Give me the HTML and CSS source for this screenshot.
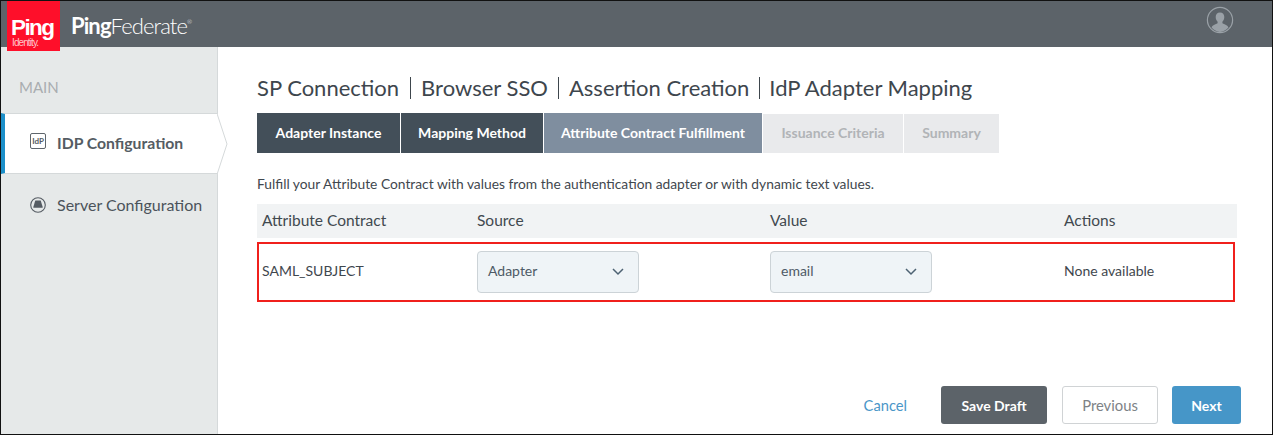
FILE: index.html
```html
<!DOCTYPE html>
<html lang="en">
<head>
<meta charset="utf-8">
<title>PingFederate</title>
<link rel="stylesheet" href="styles.css">
</head>
<body>
<div class="frame">
  <header class="topbar">
    <div class="ping-logo">
      <div class="ping-word">Ping</div>
      <div class="ping-sub">Identity.</div>
    </div>
    <div class="product"><b>Ping</b>Federate<sup>®</sup></div>
    <svg class="avatar" width="28" height="28" viewBox="0 0 28 28" aria-hidden="true">
      <circle cx="14" cy="14" r="12.6" fill="none" stroke="#9aa1a7" stroke-width="1.2"/>
      <path d="M14 6.5c-2.8 0-4.3 2-4.3 4.6 0 2 .8 3.6 1.9 4.7v1.5c-1.400 1-5 1.500-6 4.200A12 12 0 0 0 14 25.900a12 12 0 0 0 8.400-4.400c-1-2.700-4.600-3.200-6-4.200v-1.500c1.100-1.100 1.900-2.700 1.900-4.700 0-2.600-1.500-4.600-4.300-4.600z" fill="#9aa1a7"/>
    </svg>
  </header>
  <div class="body">
    <nav class="sidebar">
      <div class="side-label">MAIN</div>
      <a class="side-item active">
        <span class="idp-icon">IdP</span>
        <span>IDP Configuration</span>
        <svg class="pointer" width="11" height="62" viewBox="0 0 11 62" aria-hidden="true">
          <path d="M0 0.500 L10 31 L0 61.500 Z" fill="#fff"/>
          <path d="M0 0.500 L10 31 L0 61.500" fill="none" stroke="#d5d9da"/>
        </svg>
      </a>
      <a class="side-item">
        <svg class="server-icon" width="16" height="16" viewBox="0 0 16 16" aria-hidden="true">
          <circle cx="8" cy="8" r="7.300" fill="none" stroke="#555c63" stroke-width="1.100"/>
          <path d="M5.300 3.600h5.400l2 6.400a1 1 0 0 1-.2.800H3.500a1 1 0 0 1-.2-.8z" fill="#555c63"/>
        </svg>
        <span>Server Configuration</span>
      </a>
    </nav>
    <main class="content">
      <h1 class="crumbs">
        <span>SP Connection</span>
        <span>Browser SSO</span>
        <span>Assertion Creation</span>
        <span>IdP Adapter Mapping</span>
      </h1>
      <div class="tabs">
        <div class="tab done tab-a">Adapter Instance</div>
        <div class="tab done tab-b">Mapping Method</div>
        <div class="tab current tab-c">Attribute Contract Fulfillment</div>
        <div class="tab todo tab-d">Issuance Criteria</div>
        <div class="tab todo tab-e">Summary</div>
      </div>
      <p class="desc">Fulfill your Attribute Contract with values from the authentication adapter or with dynamic text values.</p>
      <div class="table-head row">
        <div>Attribute Contract</div>
        <div>Source</div>
        <div>Value</div>
        <div>Actions</div>
      </div>
      <div class="table-row row">
        <div class="cell">SAML_SUBJECT</div>
        <div class="select"><span>Adapter</span>
          <svg width="12" height="8" viewBox="0 0 12 8" aria-hidden="true"><path d="M1 1l5 5 5-5" fill="none" stroke="#4d6273" stroke-width="1.500"/></svg>
        </div>
        <div class="select"><span>email</span>
          <svg width="12" height="8" viewBox="0 0 12 8" aria-hidden="true"><path d="M1 1l5 5 5-5" fill="none" stroke="#4d6273" stroke-width="1.500"/></svg>
        </div>
        <div class="cell">None available</div>
      </div>
      <div class="footer">
        <a class="cancel">Cancel</a>
        <button class="btn save">Save Draft</button>
        <button class="btn prev">Previous</button>
        <button class="btn next">Next</button>
      </div>
    </main>
  </div>
</div>
</body>
</html>
```

FILE: styles.css
```css
* { box-sizing: border-box; }
html, body { margin: 0; height: 100%; }
body { font-family: Lato, "Open Sans", sans-serif; color: #3d454c; background: #fff; }

.frame {
  width: 1273px;
  height: 435px;
  border: 1px solid #111;
  display: flex;
  flex-direction: column;
  overflow: hidden;
}

.topbar {
  position: relative;
  height: 46px;
  flex: none;
  background: #5c6369;
  display: flex;
  align-items: center;
  padding-left: 70px;
  padding-right: 38px;
}
.ping-logo {
  position: absolute;
  left: 6px;
  top: 0;
  width: 53px;
  height: 50px;
  background: #fe0f2a;
  color: #fff;
  z-index: 2;
  padding: 17px 0 0 4px;
  font-family: "Liberation Sans", sans-serif;
}
.ping-word { font-size: 22.500px; font-weight: 700; line-height: 20px; height: 20px; letter-spacing: -1.600px; }
.ping-sub { width: 30px; margin-left: 1px; font-size: 10px; line-height: 10px; letter-spacing: -.9px; color: #ffc5cb; }
.product { font-size: 22px; color: #fff; letter-spacing: -.9px; font-weight: 300; padding-top: 2px; }
.product b { font-weight: 700; }
.product sup { font-size: 6px; vertical-align: 10px; line-height: 0; }
.avatar { margin-left: auto; margin-bottom: 8px; }

.body { flex: 1; display: flex; min-height: 0; }

.sidebar {
  width: 217px;
  flex: none;
  background: #e6e9e9;
  border-right: 1px solid #d5d9da;
  padding-top: 32px;
}
.side-label { font-size: 15px; color: #a9adb0; padding-left: 18px; line-height: 16px; margin-bottom: 18px; }
.side-item {
  position: relative;
  height: 61px;
  display: flex;
  align-items: center;
  gap: 11px;
  padding: 0 0 2px 29px;
  font-size: 16px;
  color: #4b535b;
}
.side-item.active {
  width: 217px;
  background: #fff;
  border-top: 1px solid #d5d9da;
  border-bottom: 1px solid #d5d9da;
  border-left: 4px solid #1c8fc9;
  padding: 0 0 2px 25px;
  font-size: 15.750px;
  font-weight: 700;
  color: #555c63;
}
.side-item + .side-item { height: 63px; }
.pointer { position: absolute; left: 212px; top: -1px; z-index: 1; }
.idp-icon {
  width: 16px;
  height: 16px;
  border: 1px solid #5f666c;
  border-radius: 2px;
  font-size: 8px;
  line-height: 14px;
  text-align: center;
  font-weight: 700;
  margin-top: -3px;
}
.server-icon { flex: none; }

.content {
  flex: 1;
  display: flex;
  flex-direction: column;
  padding: 0 0 10px 39px;
  min-width: 0;
}
.crumbs {
  margin: 27px 0 0;
  height: 28px;
  display: flex;
  align-items: center;
  font-size: 22px;
  font-weight: 400;
  color: #3e464d;
  line-height: 28px;
}
.crumbs span { padding-right: 10px; margin-right: 10px; border-right: 1px solid #3e464d; height: 22px; line-height: 22px; white-space: nowrap; }
.crumbs span:first-child { padding-right: 11px; }
.crumbs span:nth-child(3) { margin-right: 9px; }
.crumbs span:last-child { border: 0; }

.tabs { display: flex; margin-top: 11px; gap: 1px; }
.tab {
  height: 40px;
  display: flex;
  align-items: center;
  justify-content: center;
  padding-bottom: 2px;
  font-size: 14px;
  font-weight: 700;
  color: #fff;
  white-space: nowrap;
}
.tab-a { width: 143px; }
.tab-b { width: 142px; }
.tab-c { width: 218px; }
.tab-d { width: 140px; }
.tab-e { width: 95px; }
.done { background: #434f59; }
.current { background: #7f8e9f; }
.todo { background: #e9eaec; color: #b1b4b7; height: 39px; margin-top: 1px; }

.desc { margin: 23px 0 0; font-size: 13.800px; line-height: 16px; color: #3f474e; }

.row {
  display: grid;
  grid-template-columns: 215px 293px 294px 1fr;
  align-items: center;
  padding-left: 5px;
}
.table-head {
  margin-top: 12px;
  width: 980px;
  height: 34px;
  padding-bottom: 2px;
  background: #f1f3f4;
  font-size: 15.500px;
  color: #41494f;
}
.table-row {
  margin-top: 4px;
  width: 978px;
  height: 60px;
  border: 2px solid #f0201c;
  padding-left: 3px;
  font-size: 14px;
  color: #3f474e;
}
.cell { padding-bottom: 4px; }
.select {
  width: 162px;
  height: 42px;
  background: #eff4f7;
  border: 1px solid #ccd3d7;
  border-radius: 4px;
  display: flex;
  align-items: center;
  justify-content: space-between;
  padding: 0 14px 4px 10px;
  color: #4d5a66;
}
.select svg { margin-top: 4px; }

.footer {
  margin-top: auto;
  display: flex;
  align-items: center;
  justify-content: flex-end;
  padding-right: 31px;
}
.cancel { color: #4a96c8; font-size: 14.700px; margin-right: 34px; }
.btn {
  height: 38px;
  border-radius: 3px;
  border: 1px solid transparent;
  font-family: inherit;
  font-size: 14px;
  padding: 0;
}
.save { width: 106px; background: #5c6369; color: #fff; font-weight: 700; margin-right: 15px; }
.prev { width: 96px; background: #fff; border-color: #d0d3d5; color: #7d8286; margin-right: 14px; font-size: 14.800px; }
.next { width: 69px; background: #4696c8; color: #fff; font-weight: 700; }
```
